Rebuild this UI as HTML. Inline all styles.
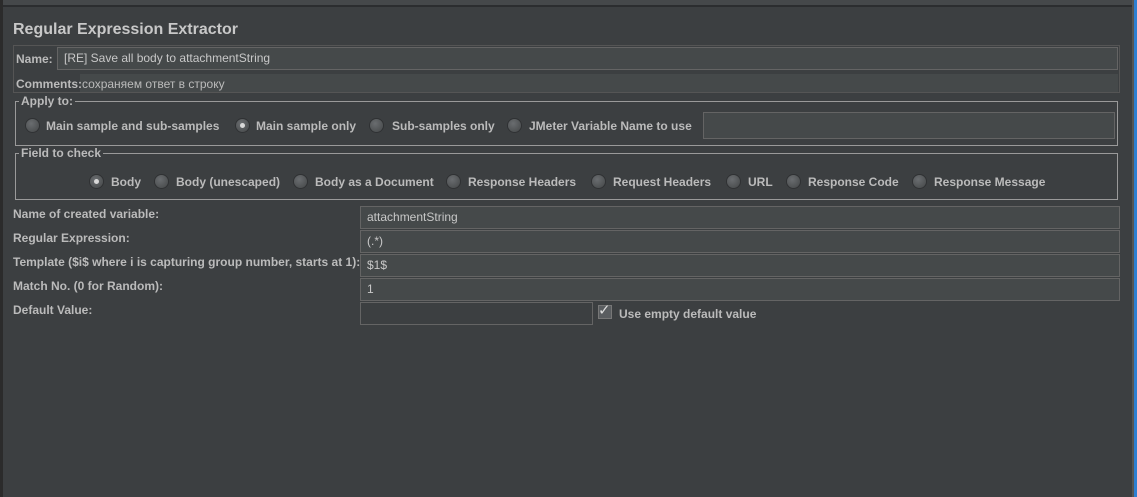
<!DOCTYPE html>
<html><head><meta charset="utf-8"><style>
*{box-sizing:border-box;margin:0;padding:0}
body{width:1137px;height:497px;background:#3c3f41;font-family:"Liberation Sans","DejaVu Sans",sans-serif;color:#bbbbbb;font-size:12px;position:relative;overflow:hidden}
.a{position:absolute;white-space:nowrap}
.b{font-weight:bold}
.f{position:absolute;background:#45494a;border:1px solid #646464;padding-left:6px;line-height:20px;color:#c8c8c8}
.r{position:absolute;width:13px;height:13px;border-radius:50%;background:radial-gradient(circle at 40% 35%,#6a6d70,#434647);box-shadow:0 0 0 1px #2f3133}
.r.on::after{content:"";position:absolute;left:4px;top:4px;width:5px;height:5px;border-radius:50%;background:#d8d8d8}
.g{position:absolute;border:1px solid #9a9a9a}
.gl{position:absolute;background:#3c3f41;padding:0 2px;font-weight:bold}
</style></head><body>
<div class="a" style="left:0;top:0;width:1137px;height:6px;background:#45484a"></div>
<div class="a" style="left:0;top:5px;width:1137px;height:2px;background:#2b2d2f"></div>
<div class="a" style="left:0;top:0;width:3px;height:497px;background:#2b2b2b"></div>
<div class="a" style="left:1132px;top:0;width:2px;height:497px;background:#555"></div>
<div class="a" style="left:1134px;top:0;width:3px;height:497px;background:#2d7fd2"></div>
<div class="a b" style="left:13px;top:21px;font-size:16px;color:#c8c8c8">Regular Expression Extractor</div>
<div class="a" style="left:13px;top:45px;width:1107px;height:48px;border:1px solid #555"></div>
<div class="a b" style="left:16px;top:52px">Name:</div>
<div class="f" style="left:57px;top:47px;width:1061px;height:23px">[RE] Save all body to attachmentString</div>
<div class="a" style="left:80px;top:74px;width:1038px;height:18px;background:#45494a"></div>
<div class="a" style="left:16px;top:77px"><b>Comments:</b>сохраняем ответ в строку</div>

<div class="g" style="left:15px;top:101px;width:1103px;height:45px"></div>
<div class="gl" style="left:19px;top:94px">Apply to:</div>
<div class="r" style="left:26px;top:119px"></div><div class="a b" style="left:46px;top:119px">Main sample and sub-samples</div>
<div class="r on" style="left:236px;top:119px"></div><div class="a b" style="left:256px;top:119px">Main sample only</div>
<div class="r" style="left:370px;top:119px"></div><div class="a b" style="left:392px;top:119px">Sub-samples only</div>
<div class="r" style="left:508px;top:119px"></div><div class="a b" style="left:529px;top:119px">JMeter Variable Name to use</div>
<div class="f" style="left:703px;top:112px;width:412px;height:27px"></div>

<div class="g" style="left:15px;top:153px;width:1103px;height:47px"></div>
<div class="gl" style="left:19px;top:146px">Field to check</div>
<div class="r on" style="left:90px;top:175px"></div><div class="a b" style="left:111px;top:175px">Body</div>
<div class="r" style="left:155px;top:175px"></div><div class="a b" style="left:176px;top:175px">Body (unescaped)</div>
<div class="r" style="left:294px;top:175px"></div><div class="a b" style="left:315px;top:175px">Body as a Document</div>
<div class="r" style="left:447px;top:175px"></div><div class="a b" style="left:468px;top:175px">Response Headers</div>
<div class="r" style="left:592px;top:175px"></div><div class="a b" style="left:613px;top:175px">Request Headers</div>
<div class="r" style="left:727px;top:175px"></div><div class="a b" style="left:748px;top:175px">URL</div>
<div class="r" style="left:787px;top:175px"></div><div class="a b" style="left:808px;top:175px">Response Code</div>
<div class="r" style="left:913px;top:175px"></div><div class="a b" style="left:934px;top:175px">Response Message</div>

<div class="a b" style="left:13px;top:207px">Name of created variable:</div>
<div class="f" style="left:360px;top:206px;width:760px;height:23px">attachmentString</div>
<div class="a b" style="left:13px;top:231px">Regular Expression:</div>
<div class="f" style="left:360px;top:230px;width:760px;height:23px">(.*)</div>
<div class="a b" style="left:13px;top:255px">Template ($i$ where i is capturing group number, starts at 1):</div>
<div class="f" style="left:360px;top:254px;width:760px;height:23px">$1$</div>
<div class="a b" style="left:13px;top:279px">Match No. (0 for Random):</div>
<div class="f" style="left:360px;top:278px;width:760px;height:23px">1</div>
<div class="a b" style="left:13px;top:303px">Default Value:</div>
<div class="f" style="left:360px;top:302px;width:233px;height:23px;background:#3c3f41"></div>
<div class="a" style="left:598px;top:305px;width:14px;height:14px;background:#5a5d60;border:1px solid #777"></div>
<div class="a" style="left:598px;top:301px;font-size:15px;color:#ddd;font-weight:bold">✓</div>
<div class="a b" style="left:619px;top:307px">Use empty default value</div>
</body></html>
